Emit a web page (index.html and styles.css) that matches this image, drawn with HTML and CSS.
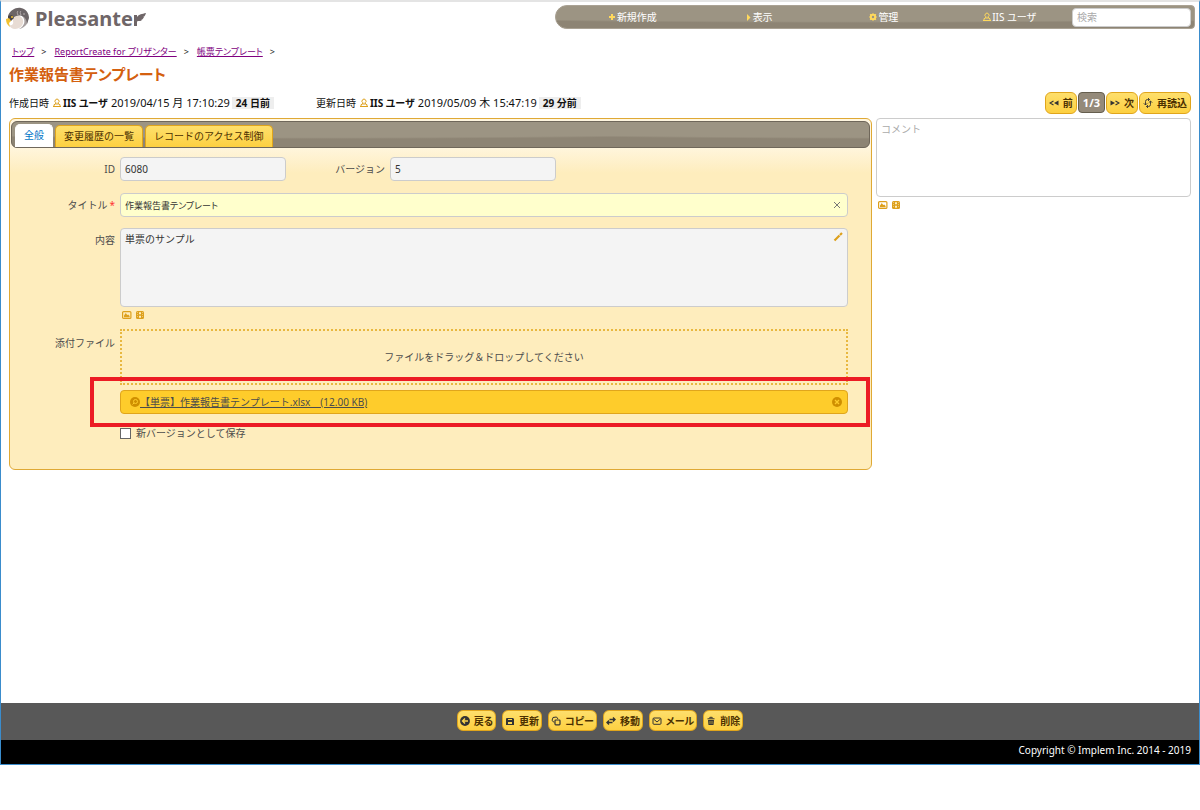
FILE: index.html
```html
<!DOCTYPE html>
<html lang="ja">
<head>
    <meta charset="utf-8">
    <title>作業報告書テンプレート</title>
    <link rel="stylesheet" href="styles.css">
</head>
<body>

<svg class="sprite" aria-hidden="true">
    <symbol id="i-user" viewBox="0 0 10 10"><path d="M3.900 4.800a2 2 0 1 1 2.200 0M3.900 4.800L3.500 6 2 6.700V8.500M6.100 4.800L6.500 6 8 6.700V8.500M1 8.500h8M3.500 6h3" fill="none" stroke="currentColor"/></symbol>
    <symbol id="i-plus" viewBox="0 0 10 10"><path d="M5 2v6M2 5h6" fill="none" stroke="currentColor" stroke-width="2"/></symbol>
    <symbol id="i-tri" viewBox="0 0 10 10"><path d="M4 2l3.500 3.500L4 9z" fill="currentColor"/></symbol>
    <symbol id="i-gear" viewBox="0 0 10 10"><circle cx="5" cy="5" r="2.200" fill="none" stroke="currentColor" stroke-width="2"/><path d="M5 1.500v1M5 7.500v1M1.500 5h1M7.500 5h1M2.200 2.200l1 1M7.800 2.200l-1 1M2.200 7.800l1-1M7.800 7.800l-1-1" stroke="currentColor" stroke-width="1.500"/></symbol>
    <symbol id="i-prev" viewBox="0 0 10 10"><path d="M4.500 3L1 5l3.500 2" fill="none" stroke="currentColor" stroke-width="1.200"/><path d="M9.500 2.500v5L5 5z" fill="currentColor"/></symbol>
    <symbol id="i-next" viewBox="0 0 10 10"><path d="M.5 2.500v5L5 5z" fill="currentColor"/><path d="M5.500 3L9 5 5.500 7" fill="none" stroke="currentColor" stroke-width="1.200"/></symbol>
    <symbol id="i-reload" viewBox="0 0 10 10"><path d="M6.500 1.500H4.500A2 2 0 0 0 2.500 3.500V7M.8 5.300L2.500 7l1.700-1.700M3.500 8.500h2A2 2 0 0 0 7.500 6.500V3M5.800 4.700L7.500 3l1.700 1.700M5 0l1.500 1.500L5 3M5 7L3.500 8.500 5 10" fill="none" stroke="currentColor" stroke-width=".9"/></symbol>
    <symbol id="i-image" viewBox="0 0 10 10"><rect x=".6" y="1.600" width="8.300" height="6.800" rx="1" fill="none" stroke="currentColor" stroke-width="1.200"/><path d="M2 7.200V5.500L3.800 3l1.400 2 1-.6L7.600 6v1.200z" fill="currentColor"/></symbol>
    <symbol id="i-film" viewBox="0 0 10 10"><rect x="1" y="1" width="8" height="8" rx="1.500" fill="currentColor"/><path d="M4 2.200h2v2H4zM4 5.800h2v2H4z" fill="#feedbd"/><path d="M2.500 2v6M7.500 2v6" stroke="#feedbd" stroke-width=".5" stroke-dasharray="1 1"/></symbol>
    <symbol id="i-pencil" viewBox="0 0 10 10"><path d="M1.500 8.500L6.500 3.500M7 3L9 1" stroke="currentColor" stroke-width="2.200"/></symbol>
    <symbol id="i-search" viewBox="0 0 10 10"><circle cx="5" cy="5" r="5" fill="currentColor"/><circle cx="5.500" cy="4.500" r="2" fill="none" stroke="#fecc2b"/><path d="M4 6L2.500 7.500" stroke="#fecc2b"/></symbol>
    <symbol id="i-close" viewBox="0 0 10 10"><circle cx="5" cy="5" r="5" fill="currentColor"/><path d="M3 3l4 4M7 3L3 7" stroke="#fecc2b" stroke-width="1.300"/></symbol>
    <symbol id="i-x" viewBox="0 0 10 10"><path d="M2 2l6 6M8 2L2 8" stroke="currentColor" fill="none"/></symbol>
    <symbol id="i-back" viewBox="0 0 10 10"><circle cx="5" cy="5" r="4.900" fill="currentColor"/><path d="M8 5H3M5 2.500L2.500 5 5 7.500" fill="none" stroke="#fdd64c" stroke-width="1.400"/></symbol>
    <symbol id="i-disk" viewBox="0 0 10 10"><path d="M1 3Q1 2 2 2h6l1 1v6H1z" fill="currentColor"/><path d="M3 3h4v1H3zM3 6h4v2H3z" fill="#fdd64c"/></symbol>
    <symbol id="i-copy" viewBox="0 0 10 10"><path d="M3.300 6.500L1 4.500 2 1.500 5.500 1 7 3" fill="none" stroke="currentColor"/><rect x="4" y="4" width="5" height="4.800" rx=".8" fill="none" stroke="currentColor" stroke-width="1.200"/></symbol>
    <symbol id="i-move" viewBox="0 0 10 10"><path d="M3.500 3.500H9M7 1.500l2 2-2 2M6.500 6.500H1M3 4.500l-2 2 2 2" fill="none" stroke="currentColor" stroke-width="1.400"/></symbol>
    <symbol id="i-mail" viewBox="0 0 10 10"><rect x="1" y="2" width="8" height="6.300" rx="1" fill="none" stroke="currentColor"/><path d="M1.500 3L5 6l3.500-3" fill="none" stroke="currentColor"/></symbol>
    <symbol id="i-trash" viewBox="0 0 10 10"><path d="M1.500 2.800h7M3.800 2.300V1.300h2.400v1" fill="none" stroke="currentColor"/><path d="M2 4h6l-.5 5h-5z" fill="currentColor"/><path d="M4 5v3M6 5v3" stroke="#fdd64c" stroke-width=".6"/></symbol>
</svg>

<div class="window">
    <header class="header">
        <a class="logo" href="#">
            <svg class="logo-bird" viewBox="0 0 24 24" aria-hidden="true">
                <path d="M7 9c4-2 9 0 10 4 1 5-3 9-8 9-3 0-5-2-6-4 3 1 5-1 4-4z" fill="#e8dcd4"/>
                <path d="M16 9c4 4 3 10-3 13 6-1 10-6 9-12l-3-3z" fill="#a8a0a0"/>
                <path d="M2 9C4 3 10 0 15 1c5 1 8 5 8 10l-2 6c0-4-2-7-5-8-4-1-7 0-9 2l-4 1z" fill="#6b6466"/>
                <path d="M12 4c-1 1-1 2 0 4M15 4c-1 1-1 2 0 4M18 6v2" stroke="#b8b0b0" fill="none"/>
                <path d="M2 9l4-1 2 3-3 3-3-1z" fill="#4a4446"/>
                <path d="M0 12l3-1 2 3-2 2 1 4C1 18 0 15 0 12z" fill="#f2c230"/>
                <circle cx="6" cy="10" r="1" fill="#f2c230"/>
            </svg>
            <span class="logo-text">Pleasante</span>
            <svg class="logo-wing" viewBox="0 0 13 18" aria-hidden="true"><path d="M1 16V5h3v2c2-3 5-3 9-4-1 3-2 4-3 4h1c-1 2-2 3-3 3h1c-2 2-5 0-5 2v4z" fill="#6f6668"/></svg>
        </a>
        <nav class="nav wave">
            <ul class="nav-menu">
                <li><svg class="icon"><use href="#i-plus"/></svg>新規作成</li>
                <li><svg class="icon"><use href="#i-tri"/></svg>表示</li>
                <li><svg class="icon"><use href="#i-gear"/></svg>管理</li>
                <li><svg class="icon"><use href="#i-user"/></svg>IIS ユーザ</li>
            </ul>
            <input class="search" type="text" placeholder="検索" aria-label="検索">
        </nav>
    </header>

    <main class="main">
        <ul class="breadcrumb">
            <li><a href="#">トップ</a></li>
            <li><a href="#">ReportCreate for プリザンター</a></li>
            <li><a href="#">帳票テンプレート</a></li>
        </ul>
        <h1 class="title">作業報告書テンプレート</h1>

        <div class="record-bar">
            <div class="record-info">
                <div class="stamp">作成日時<svg class="icon"><use href="#i-user"/></svg><b>IIS ユーザ</b><span class="time">2019/04/15 月 17:10:29</span><b class="ago">24 日前</b></div>
                <div class="stamp">更新日時<svg class="icon"><use href="#i-user"/></svg><b>IIS ユーザ</b><span class="time">2019/05/09 木 15:47:19</span><b class="ago">29 分前</b></div>
            </div>
            <div class="pager">
                <button type="button" class="button"><svg class="icon"><use href="#i-prev"/></svg>前</button>
                <button type="button" class="button current">1/3</button>
                <button type="button" class="button"><svg class="icon"><use href="#i-next"/></svg>次</button>
                <button type="button" class="button"><svg class="icon"><use href="#i-reload"/></svg>再読込</button>
            </div>
        </div>

        <div class="columns">
            <form class="editor">
                <div class="tabs wave">
                    <a class="tab active" href="#">全般</a>
                    <a class="tab" href="#">変更履歴の一覧</a>
                    <a class="tab" href="#">レコードのアクセス制御</a>
                </div>
                <div class="fields">
                    <div class="field-pair">
                        <div class="field">
                            <label for="recordId">ID</label>
                            <input id="recordId" class="box" type="text" value="6080" readonly>
                        </div>
                        <div class="field">
                            <label for="version">バージョン</label>
                            <input id="version" class="box" type="text" value="5" readonly>
                        </div>
                    </div>
                    <div class="field">
                        <label for="recordTitle">タイトル<span class="required">*</span></label>
                        <div class="control">
                            <input id="recordTitle" class="box editing" type="text" value="作業報告書テンプレート">
                            <svg class="icon clear"><use href="#i-x"/></svg>
                        </div>
                    </div>
                    <div class="field">
                        <label for="body">内容</label>
                        <div class="control">
                            <textarea id="body" class="box area">単票のサンプル</textarea>
                            <svg class="icon pencil"><use href="#i-pencil"/></svg>
                            <div class="tools"><svg class="icon"><use href="#i-image"/></svg><svg class="icon"><use href="#i-film"/></svg></div>
                        </div>
                    </div>
                    <div class="field">
                        <span class="label">添付ファイル</span>
                        <div class="control">
                            <div class="drop">ファイルをドラッグ＆ドロップしてください</div>
                            <div class="file">
                                <svg class="icon"><use href="#i-search"/></svg>
                                <a href="#">【単票】作業報告書テンプレート.xlsx　(12.00 KB)</a>
                                <svg class="icon remove"><use href="#i-close"/></svg>
                            </div>
                        </div>
                    </div>
                    <div class="check">
                        <input id="newVersion" type="checkbox">
                        <label for="newVersion">新バージョンとして保存</label>
                    </div>
                </div>
            </form>

            <aside class="comments">
                <textarea class="box area comment" placeholder="コメント" aria-label="コメント"></textarea>
                <div class="tools"><svg class="icon"><use href="#i-image"/></svg><svg class="icon"><use href="#i-film"/></svg></div>
            </aside>
        </div>
    </main>

    <div class="commands">
        <button type="button" class="button"><svg class="icon"><use href="#i-back"/></svg>戻る</button>
        <button type="button" class="button"><svg class="icon"><use href="#i-disk"/></svg>更新</button>
        <button type="button" class="button"><svg class="icon"><use href="#i-copy"/></svg>コピー</button>
        <button type="button" class="button"><svg class="icon"><use href="#i-move"/></svg>移動</button>
        <button type="button" class="button"><svg class="icon"><use href="#i-mail"/></svg>メール</button>
        <button type="button" class="button"><svg class="icon"><use href="#i-trash"/></svg>削除</button>
    </div>
    <footer class="footer">Copyright © Implem Inc. 2014 - 2019</footer>
</div>

<script>
    // start editing at the end of the title
    const title = document.getElementById('recordTitle');
    title.focus();
    title.setSelectionRange(title.value.length, title.value.length);
</script>

</body>
</html>
```
FILE: styles.css
```css
* {
    box-sizing: border-box;
}

body {
    display: flex;
    flex-direction: column;
    min-height: 100vh;
    margin: 0;
    padding-bottom: 45px;
    background: #fff;
    color: #222;
    font-family: "Noto Sans", "Noto Sans CJK JP", sans-serif;
    font-size: 10px;
    line-height: 16px;
}

input, textarea, button {
    font: inherit;
    color: inherit;
}

a {
    color: inherit;
}

ul {
    list-style: none;
    margin: 0;
    padding: 0;
}

.sprite {
    position: absolute;
    width: 0;
    height: 0;
}

.icon {
    width: 10px;
    height: 10px;
    flex: none;
    color: #dda01c;
}

/* window frame */
.window {
    flex: 1;
    display: flex;
    flex-direction: column;
    border: 1px solid #3a8ccc;
    border-top: 2px solid #e4e4e4;
}

.wave {
    background: radial-gradient(ellipse 700px 17px at 50% 0, #9c9483 90%, #8d8474 100%) 0 0 / 600px 100%;
    background-color: #8d8474;
}

/* header */
.header {
    display: flex;
    justify-content: space-between;
    align-items: flex-start;
    padding: 3px 4px 0 5px;
}

.logo {
    display: flex;
    align-items: center;
    padding-top: 2px;
    color: #6f6668;
    text-decoration: none;
}

.logo-bird {
    width: 24px;
    height: 24px;
}

.logo-text {
    margin-left: 5px;
    font: bold 20px/24px "Noto Sans", sans-serif;
}

.logo-wing {
    width: 13px;
    height: 18px;
}

.nav {
    display: flex;
    align-items: center;
    width: 640px;
    height: 24px;
    padding: 0 3px 0 13px;
    border: 1px solid #aaa294;
    border-radius: 12px 4px 4px 12px;
}

.nav-menu {
    flex: 1;
    display: flex;
    color: #fff;
    font-feature-settings: "palt";
}

.nav-menu li {
    flex: 1;
    display: flex;
    justify-content: center;
    align-items: center;
}

.nav-menu .icon {
    color: #ffd95c;
}

.search {
    width: 119px;
    height: 19px;
    padding: 0 4px;
    border: 1px solid #ccc;
    border-radius: 4px;
    background: #fff;
}

::placeholder {
    color: #aaa;
    opacity: 1;
}

/* main */
.main {
    flex: 1;
    padding: 13px 8px 0;
}

.breadcrumb {
    display: flex;
    padding-left: 3px;
    font-size: 9px;
    font-feature-settings: "palt";
}

.breadcrumb li::after {
    content: ">";
    margin: 0 8px 0 7px;
}

.breadcrumb a {
    color: #800080;
}

.title {
    margin: 4px 0 0;
    color: #d4600f;
    font-size: 15px;
    line-height: 20px;
    font-feature-settings: "palt";
}

.record-bar {
    display: flex;
    justify-content: space-between;
    align-items: center;
    margin-top: 8px;
    height: 22px;
}

.record-info {
    display: flex;
    gap: 42px;
    color: #111;
}

.stamp {
    display: flex;
    align-items: center;
    font-feature-settings: "palt";
}

.stamp .icon {
    margin: 0 1px 0 3px;
}

.time {
    margin: 0 2px 0 3px;
    font-size: 11px;
}

.ago {
    padding: 0 4px;
    line-height: 12px;
    background: #eee;
}

.pager {
    display: flex;
    align-items: flex-start;
    gap: 1px;
}

.button {
    display: flex;
    align-items: center;
    gap: 4px;
    height: 22px;
    padding: 0 3px;
    border: 1px solid #e0a51c;
    border-radius: 6px;
    background: linear-gradient(#fedf6c, #fdd041);
    color: #4c3000;
    font-weight: bold;
    font-feature-settings: "palt";
    white-space: nowrap;
}

.button .icon {
    color: #333;
}

.current {
    height: 21px;
    padding: 0 4px;
    border-color: #655e4e;
    border-radius: 4px;
    background: #948a7a;
    color: #fff;
    font-size: 11px;
}

.columns {
    display: flex;
    align-items: flex-start;
    gap: 4px;
    margin-top: 4px;
}

/* editor */
.editor {
    flex: 1;
    padding: 2px 1px 0;
    border: 1px solid #dfa935;
    border-radius: 6px;
    background: linear-gradient(#fff6e0 26px, #feedbd 54px);
    color: #4c4c4c;
}

.tabs {
    display: flex;
    align-items: flex-end;
    gap: 2px;
    height: 27px;
    padding: 0 3px;
    border: 1px solid #6f675a;
    border-radius: 6px;
}

.tab {
    height: 22px;
    padding: 0 8px;
    border: 1px solid #e0a51c;
    border-bottom: 0;
    border-radius: 5px 5px 0 0;
    background: linear-gradient(#fedf6c, #fdd041);
    color: #4c3000;
    line-height: 20px;
    text-decoration: none;
}

.tab.active {
    height: 23px;
    border-color: #fff;
    background: #fff;
    color: #0074c7;
}

.fields {
    padding: 9px 22px 28px 5px;
}

.field {
    display: flex;
    flex: 1;
    margin-bottom: 11px;
}

.field-pair {
    display: flex;
}

.field-pair .field {
    flex: none;
    width: 270px;
    margin-bottom: 12px;
}

.field > label,
.label {
    width: 104px;
    padding: 4px 5px 0 0;
    text-align: right;
}

.required {
    margin-left: 2px;
    color: #f33;
}

.box {
    display: block;
    height: 24px;
    padding: 0 4px;
    border: 1px solid #ccc;
    border-radius: 4px;
    background: #f4f4f4;
    color: #333;
    outline: 0;
}

.field-pair .box {
    width: 166px;
}

.control {
    position: relative;
    flex: 1;
}

.control .box {
    width: 100%;
}

.box.editing {
    background: #ffffcc;
    font-size: 9px;
    font-feature-settings: "palt";
}

.box.area {
    height: 79px;
    padding: 2px 4px;
    resize: none;
}

.clear,
.pencil {
    position: absolute;
    top: 7px;
    right: 6px;
}

.clear {
    color: #777;
}

.pencil {
    top: 4px;
    right: 5px;
}

.tools {
    display: flex;
    gap: 3px;
    padding: 3px 0 0 2px;
}

.drop {
    display: flex;
    align-items: center;
    justify-content: center;
    height: 56px;
    margin-top: -2px;
    border: 2px dotted #e8b840;
}

.file {
    position: relative;
    display: flex;
    align-items: center;
    height: 24px;
    margin-top: 5px;
    padding: 0 5px 0 9px;
    border: 1px solid #e0a51c;
    border-radius: 4px;
    background: #fecc2b;
}

/* red frame round the attached file */
.file::after {
    content: "";
    position: absolute;
    inset: -14px -23px -14px -31px;
    border: 4px solid #ec1c24;
    pointer-events: none;
}

.file .icon {
    color: #cf8f00;
}

.file .remove {
    margin-left: auto;
}

.check {
    display: flex;
    align-items: center;
    gap: 5px;
    padding-left: 104px;
}

.check input {
    appearance: none;
    width: 11px;
    height: 11px;
    margin: 0;
    border: 1px solid #666;
    background: #fff;
}

.check input:checked {
    background: #666;
}

/* comments */
.comments {
    width: 315px;
}

.box.comment {
    width: 100%;
    background: #fff;
}

/* bottom */
.commands {
    display: flex;
    justify-content: center;
    align-items: center;
    gap: 6px;
    padding: 7px 0 9px;
    background: #585858;
}

.commands .button {
    height: 21px;
    padding: 0 2px;
}

.footer {
    height: 24px;
    padding: 0 8px;
    background: #000;
    color: #fff;
    font-size: 10px;
    line-height: 21px;
    text-align: right;
}
```
